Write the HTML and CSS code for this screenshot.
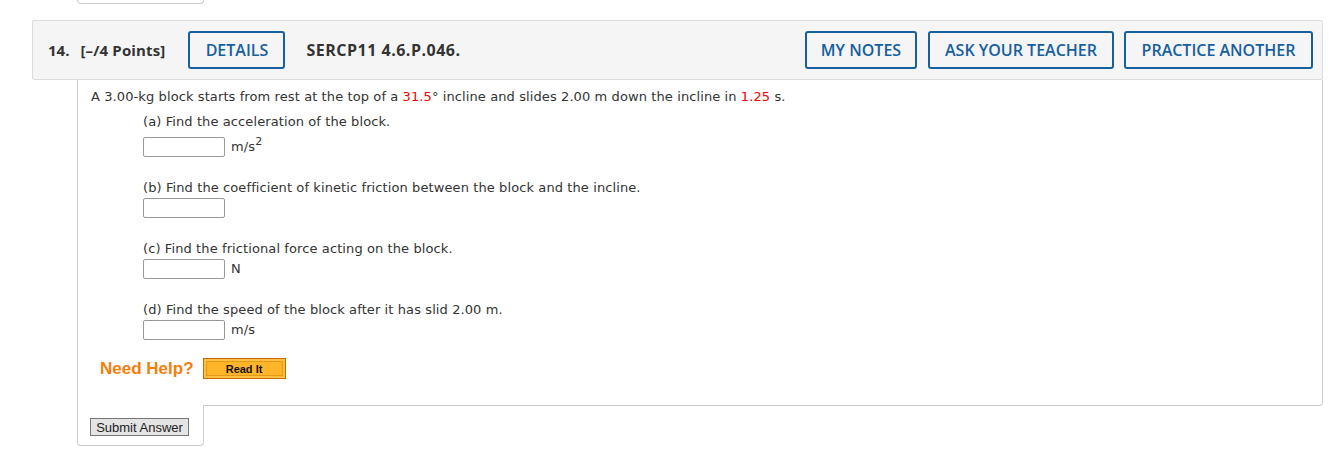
FILE: index.html
```html
<!DOCTYPE html>
<html>
<head>
<meta charset="utf-8">
<link rel="stylesheet" href="styles.css">
</head>
<body>
<div class="prev-tab"></div>
<div class="question">
  <div class="q-header">
    <span class="q-num">14.</span>
    <span class="q-points">[–/4 Points]</span>
    <button class="q-btn q-details">DETAILS</button>
    <span class="q-code">SERCP11 4.6.P.046.</span>
    <div class="q-actions">
      <button class="q-btn q-notes">MY NOTES</button>
      <button class="q-btn q-ask">ASK YOUR TEACHER</button>
      <button class="q-btn q-practice">PRACTICE ANOTHER</button>
    </div>
  </div>
  <div class="q-body">
    <p class="q-text">A 3.00-kg block starts from rest at the top of a <span class="red">31.5</span>° incline and slides 2.00 m down the incline in <span class="red">1.25</span> s.</p>
    <div class="part part-a">
      <p class="part-label">(a) Find the acceleration of the block.</p>
      <div class="answer"><span class="box"></span><span class="unit">m/s<sup>2</sup></span></div>
    </div>
    <div class="part">
      <p class="part-label">(b) Find the coefficient of kinetic friction between the block and the incline.</p>
      <div class="answer"><span class="box"></span></div>
    </div>
    <div class="part">
      <p class="part-label">(c) Find the frictional force acting on the block.</p>
      <div class="answer"><span class="box"></span><span class="unit">N</span></div>
    </div>
    <div class="part">
      <p class="part-label">(d) Find the speed of the block after it has slid 2.00 m.</p>
      <div class="answer"><span class="box"></span><span class="unit">m/s</span></div>
    </div>
    <div class="help">
      <span class="help-text">Need Help?</span>
      <button class="read-it">Read It</button>
    </div>
  </div>
  <div class="submit-tab">
    <button class="submit">Submit Answer</button>
  </div>
</div>
</body>
</html>
```

FILE: styles.css
```css
html, body {
  margin: 0;
  padding: 0;
  background: #fff;
}
body {
  font-family: "DejaVu Sans", Verdana, sans-serif;
  color: #333;
}
.prev-tab {
  margin-left: 77px;
  width: 125px;
  height: 3px;
  border: 1px solid #ccc;
  border-top: none;
  border-radius: 0 0 4px 4px;
}
.question {
  margin: 16px 0 0 32px;
  width: 1291px;
}
.q-header {
  box-sizing: border-box;
  height: 60px;
  background: #f5f5f5;
  border: 1px solid #dcdcdc;
  border-radius: 2px;
  display: flex;
  align-items: center;
  padding: 0 9px 0 15px;
  font-family: "Open Sans", sans-serif;
  font-weight: 700;
  font-size: 15px;
  color: #333;
}
.q-num {
  margin-right: 11px;
}
.q-points {
  margin-right: 21px;
  letter-spacing: 0.15px;
}
.q-code {
  font-size: 16px;
  letter-spacing: 0.5px;
}
.q-btn {
  box-sizing: border-box;
  height: 38px;
  background: transparent;
  border: 2px solid #16609f;
  border-radius: 3px;
  color: #16609f;
  font-family: "Open Sans", sans-serif;
  font-weight: 600;
  font-size: 16px;
  padding: 0;
  cursor: pointer;
}
.q-details {
  width: 97px;
  margin: 0 21px 0 2px;
}
.q-actions {
  margin-left: auto;
  display: flex;
  gap: 11px;
}
.q-notes { width: 112px; }
.q-ask { width: 186px; }
.q-practice { width: 189px; margin-left: -1px; }
.q-body {
  margin-left: 45px;
  border: 1px solid #ccc;
  border-top: none;
  border-radius: 0 0 4px 0;
  padding: 8px 0 26px 13px;
  font-size: 13px;
  line-height: 18px;
  letter-spacing: 0.1px;
}
.q-body p {
  margin: 0;
}
.red { color: #e00; }
.part {
  margin: 22px 0 0 52px;
}
.part-a {
  margin-top: 7px;
}
.part-label {
  margin: 0;
}
.answer {
  display: flex;
  align-items: center;
  margin-top: 1px;
  height: 20px;
}
.part-a .answer {
  margin-top: 6px;
}
.box {
  box-sizing: border-box;
  width: 82px;
  height: 20px;
  border: 1px solid #999;
  border-radius: 2px;
  background: #fff;
}
.unit {
  margin-left: 6px;
}
.unit sup {
  font-size: 11px;
  line-height: 0;
  vertical-align: 6px;
}
.help {
  display: flex;
  align-items: center;
  margin: 18px 0 0 9px;
  height: 21px;
  letter-spacing: 0;
}
.help-text {
  font-family: "Liberation Sans", Arial, sans-serif;
  font-weight: 700;
  font-size: 17px;
  color: #f57e0a;
  margin-right: 10px;
}
.read-it {
  box-sizing: border-box;
  width: 83px;
  height: 21px;
  margin-left: -1px;
  background: #ffb52a;
  border: 1px solid #c46a00;
  box-shadow: inset 0 0 0 2px #ffc13f, inset 0 0 0 3px #e59a1a;
  font-family: "Liberation Sans", Arial, sans-serif;
  font-weight: 700;
  font-size: 11px;
  color: #111;
  padding: 0;
}
.submit-tab {
  margin: -1px 0 0 45px;
  width: 125px;
  height: 40px;
  background: #fff;
  border: 1px solid #ccc;
  border-top: none;
  border-radius: 0 0 4px 4px;
  position: relative;
}
.submit {
  margin: 13px 0 0 12px;
  box-sizing: border-box;
  width: 99px;
  height: 18px;
  padding: 0;
  background: #e4e4e4;
  border: 1px solid #777;
  border-radius: 0;
  font-family: "Liberation Sans", Arial, sans-serif;
  font-size: 13px;
  color: #222;
}
```
